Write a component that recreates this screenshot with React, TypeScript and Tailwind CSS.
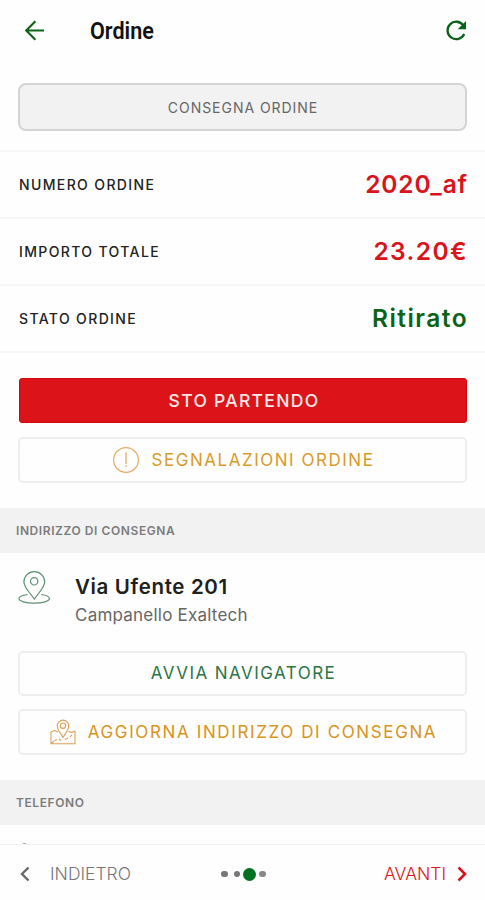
import type { ReactNode } from "react";

function BackArrow() {
  return (
    <svg className="ml-[24px] h-[22px] w-[22px] shrink-0" viewBox="0 0 22 22" fill="none" stroke="#0b6318" strokeWidth="2.1">
      <path d="M20 10.500H2.200M11.400 1.300 2.200 10.500l9.200 9.200" />
    </svg>
  );
}

function Refresh() {
  return (
    <svg className="h-[22px] w-[22px] shrink-0" viewBox="0 0 22 22" fill="none">
      <path d="M18.300 5.300A8.700 8.700 0 1 0 19.200 14" stroke="#0b6318" strokeWidth="2.300" />
      <path d="M21 1v8.300h-8.300z" fill="#0b6318" />
    </svg>
  );
}

function Alert() {
  return (
    <svg className="h-[27px] w-[27px] shrink-0" viewBox="0 0 27 27" fill="none" stroke="#e0ad62" strokeWidth="1.200">
      <circle cx="13" cy="13" r="12.400" />
      <path d="M13 5.300v11.700M13 18.300v1.800" strokeWidth="1.300" />
    </svg>
  );
}

function Pin() {
  return (
    <svg className="h-[34px] w-[32px] shrink-0" viewBox="0 0 32 34" fill="none" stroke="#5c9270" strokeWidth="1.200" strokeLinejoin="round">
      <path d="M16.300 29.200C12.700 23.500 5.900 17.300 5.900 11.900a10.400 10.200 0 0 1 20.800 0c0 5.400-6.800 11.600-10.400 17.300Z" />
      <circle cx="16.200" cy="11.300" r="3.700" />
      <path d="M9.600 24.500C4.600 25.200 1 26.600 1 28.500c0 2.700 6.700 4.600 15.200 4.600s15.200-1.900 15.200-4.600c0-1.900-3.300-3.300-8.300-4" />
    </svg>
  );
}

function MapPin() {
  return (
    <svg className="h-[26px] w-[26px] shrink-0" viewBox="0 0 26 26" fill="none" stroke="#dda25c" strokeWidth="1.100" strokeLinejoin="round">
      <path d="M13 18.500C11 14.500 7.300 11.300 7.300 7a5.700 5.900 0 0 1 11.400 0c0 4.300-3.700 7.500-5.700 11.500Z" />
      <circle cx="13" cy="6.700" r="2.700" />
      <path d="M8 13 4.500 11.500 1 13v11.800h24V12l-3.200 1.400-3.300-.9M1 24.800 4 22M4.500 21.500l2.500-1M9 20l2 1.500M15 20.500l3-1.500M20 17.800l2-2" />
    </svg>
  );
}

function DataRow({ label, value, className }: { label: string; value: string; className: string }) {
  return (
    <div className="flex h-[67px] items-center justify-between border-b-2 border-[#f7f7f7] pr-[18px] pl-[19px]">
      <span className="text-[14px] font-medium tracking-[1.370px] text-[#222]">{label}</span>
      <span className={`-mr-px text-[24.500px] font-semibold ${className}`}>{value}</span>
    </div>
  );
}

function OutlineButton({ children, className }: { children: ReactNode; className: string }) {
  return (
    <button className={`flex w-full items-center justify-center whitespace-nowrap rounded-[5px] border-2 border-[#eeeeee] pl-[2px] text-[17px] ${className}`}>
      {children}
    </button>
  );
}

function SectionTitle({ children }: { children: ReactNode }) {
  return (
    <h2 className="flex h-[45px] items-center bg-[#f2f2f2] pl-[16px] text-[12px] font-semibold tracking-[0.580px] text-[#7c7c7c]">
      {children}
    </h2>
  );
}

export default function App() {
  return (
    <div className="flex h-[900px] w-[485px] flex-col overflow-hidden bg-[#fefefe] font-['Inter','Liberation_Sans',sans-serif]">
      <header className="flex h-[61px] shrink-0 items-center pr-[18px]">
        <BackArrow />
        <h1 className="ml-[44px] flex-1 origin-left scale-x-[0.88] pt-[2px] font-['Roboto',sans-serif] text-[24.500px] font-semibold text-[#111]">Ordine</h1>
        <Refresh />
      </header>

      <main className="min-h-0 flex-1 overflow-hidden">
        <div className="px-[18px] pt-[22px] pb-[19px]">
          <button className="flex h-[48px] w-full items-center justify-center rounded-[8px] border-2 border-[#d4d4d4] bg-[#f2f2f2] pl-px text-[14px] tracking-[0.950px] text-[#666]">
            CONSEGNA ORDINE
          </button>
        </div>

        <div className="border-t-2 border-[#f7f7f7]">
          <DataRow label="NUMERO ORDINE" value="2020_af" className="tracking-[0.850px] text-[#d9141a]" />
          <DataRow label="IMPORTO TOTALE" value="23.20€" className="tracking-[1.400px] text-[#d9141a]" />
          <DataRow label="STATO ORDINE" value="Ritirato" className="tracking-[1.450px] text-[#0b6318]" />
        </div>

        <div className="px-[18px] pt-[25px]">
          <button className="mx-px flex h-[45px] w-[448px] items-center justify-center rounded-[3px] border border-[#d2050d] bg-[#dc1419] pt-[2px] pl-[2px] text-[17.500px] font-medium tracking-[1.300px] text-[#ffe9e9]">
            STO PARTENDO
          </button>
          <OutlineButton className="mt-[14px] h-[46px] gap-[12px] tracking-[1.520px] text-[#d89b2b]">
            <Alert />
            <span className="pt-[2px]">SEGNALAZIONI ORDINE</span>
          </OutlineButton>
        </div>

        <div className="mt-[25px]">
          <SectionTitle>INDIRIZZO DI CONSEGNA</SectionTitle>
          <div className="px-[18px] pt-[17px] pb-[25px]">
            <div className="flex">
              <Pin />
              <div className="ml-[25px]">
                <p className="mt-[3px] text-[20.500px] leading-[28px] font-semibold tracking-[0.650px] text-[#202020]">Via Ufente 201</p>
                <p className="text-[17px] leading-[28px] tracking-[0.220px] text-[#666]">Campanello Exaltech</p>
              </div>
            </div>
            <OutlineButton className="mt-[22px] h-[45px] tracking-[1.450px] text-[#2b7548]">AVVIA NAVIGATORE</OutlineButton>
            <OutlineButton className="mt-[13px] h-[46px] gap-[12px] tracking-[1.620px] text-[#d89420]">
              <MapPin />
              <span className="pt-[2px]">AGGIORNA INDIRIZZO DI CONSEGNA</span>
            </OutlineButton>
          </div>
          <SectionTitle>TELEFONO</SectionTitle>
          <div className="flex h-[19px] items-end pl-[23px]">
            <span className="h-px w-[3px] bg-[#aaa]" />
          </div>
        </div>
      </main>

      <footer className="grid h-[56px] shrink-0 grid-cols-3 items-center border-t border-[#f2f2f2] pt-[3px] pr-[18px] pl-[20px]">
        <button className="flex items-center text-[17.500px] font-light text-[#777]">
          <svg className="mr-[20px] h-[16px] w-[10px]" viewBox="0 0 10 16" fill="none" stroke="#686868" strokeWidth="2.400">
            <path d="M8.500 1.500 2 8l6.500 6.500" />
          </svg>
          INDIETRO
        </button>
        <div className="flex items-center justify-center gap-[6px]">
          <i className="size-[6.500px] rounded-full bg-[#777]" />
          <i className="size-[6.500px] rounded-full bg-[#777]" />
          <i className="-mx-[3px] size-[13px] rounded-full bg-[#007022]" />
          <i className="size-[6.500px] rounded-full bg-[#888]" />
        </div>
        <button className="flex items-center justify-end text-[17.500px] font-light text-[#d9141a]">
          AVANTI
          <svg className="ml-[11px] h-[16px] w-[10px]" viewBox="0 0 10 16" fill="none" stroke="#d9141a" strokeWidth="2.600">
            <path d="M1.500 1.500 8 8l-6.500 6.500" />
          </svg>
        </button>
      </footer>
    </div>
  );
}
